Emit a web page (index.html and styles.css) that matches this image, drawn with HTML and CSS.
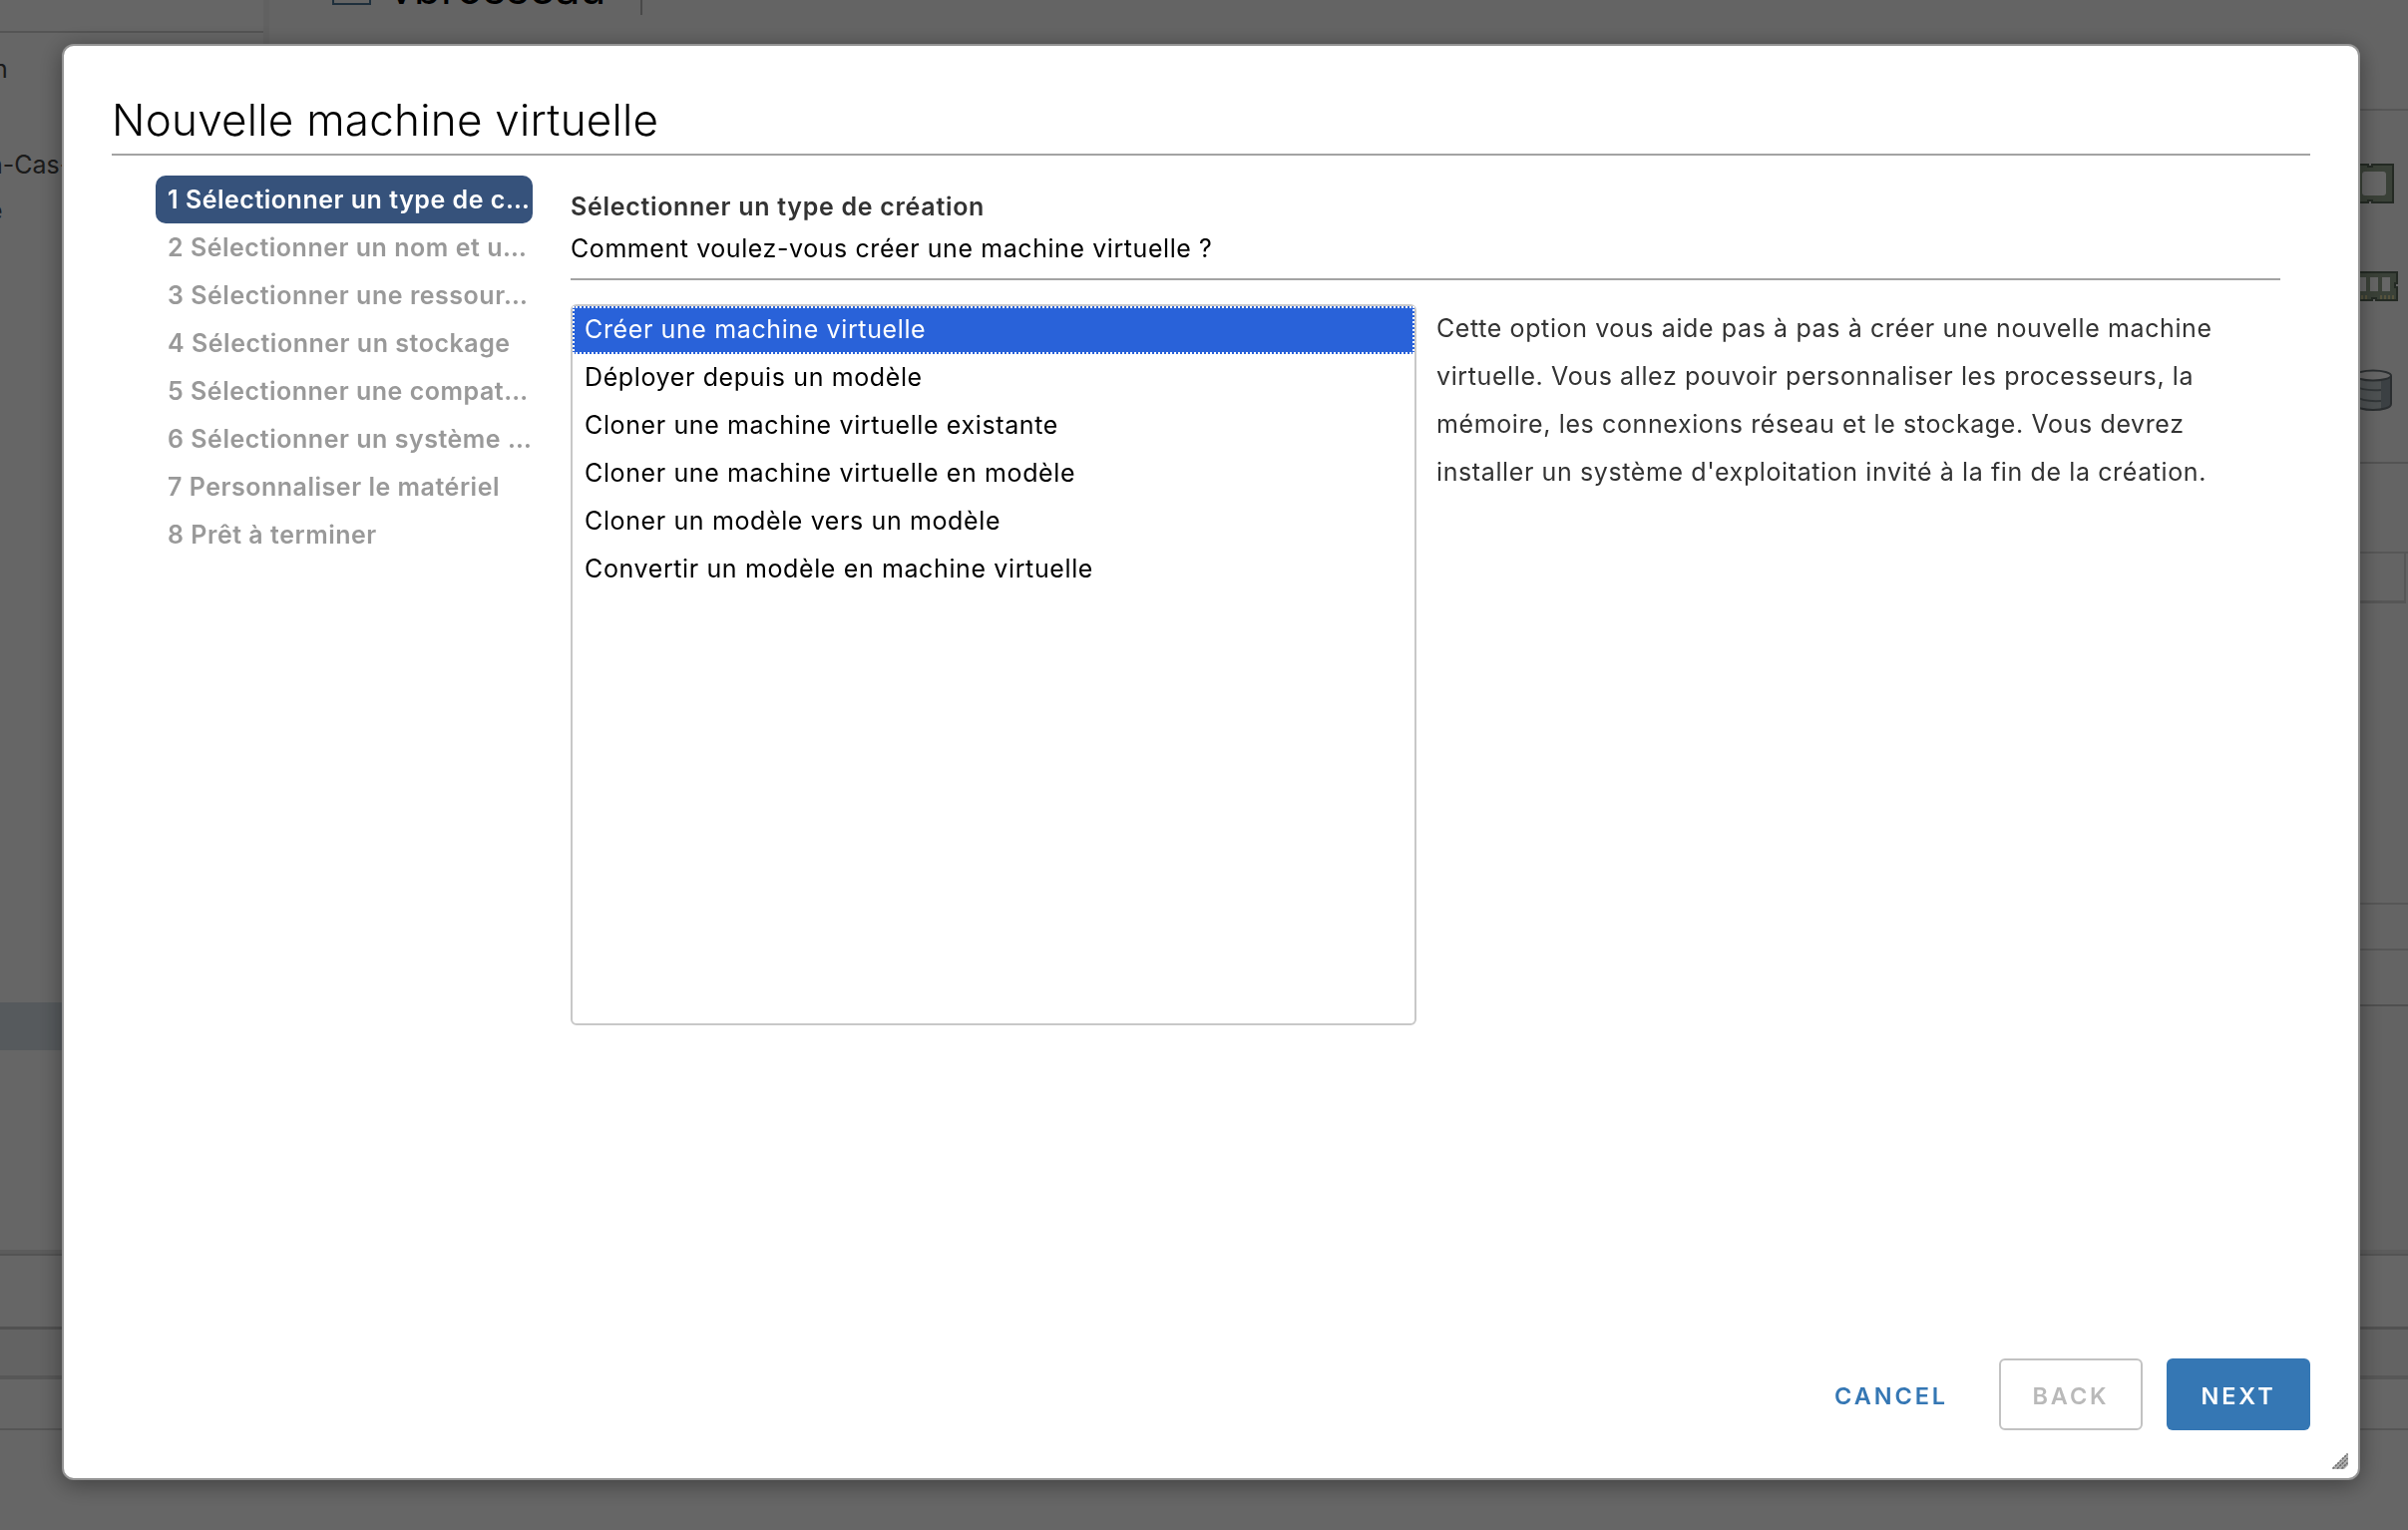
FILE: index.html
```
<!DOCTYPE html>
<html lang="fr">
<head>
<meta charset="utf-8">
<title>Nouvelle machine virtuelle</title>
<link rel="stylesheet" href="styles.css">
</head>
<body>
<div class="app">
  <div class="workspace">
    <aside class="tree">
      <div class="tree-head"></div>
      <div class="tree-row row-a">n</div>
      <div class="tree-row row-b">n-Cas-</div>
      <div class="tree-row row-c">e</div>
      <div class="tree-row selected"></div>
    </aside>
    <main class="main">
      <header class="object-head">
        <span class="object-icon"></span>
        <span class="object-name">vbrosseau</span>
        <span class="object-divider"></span>
      </header>
      <section class="meters">
        <svg width="48" height="40" viewBox="0 0 48 40">
          <path d="M5 1H18V3H22V1H43V39H22V37H18V39H5Z" fill="#92a38c" stroke="#5a6a5a" stroke-width="2"/>
          <rect x="12" y="8" width="24" height="24" rx="3" fill="#fff"/>
        </svg>
        <svg width="48" height="30" viewBox="0 0 48 30">
          <path d="M-4 1H47V12H45V16H47V29H26V27H22V29H-4Z" fill="#92a38c" stroke="#5a6a5a" stroke-width="2"/>
          <path d="M8 6h8v14H8zM20 6h8v14H20zM32 6h8v14H32z" fill="#fff"/>
          <path d="M12 24v4M16 24v4M31 24v4M35 24v4M39 24v4M43 24v4" stroke="#d6cf98" stroke-width="2"/>
        </svg>
        <svg width="48" height="42" viewBox="0 0 48 42">
          <path d="M5 7V35C5 43 41 43 41 35V7Z" fill="#c2cccf"/>
          <path d="M31 11L41 7V35Q40 39 31 40Z" fill="#93a1a8"/>
          <path d="M5 17Q12 22 31 21M5 27Q12 33 31 32" fill="none" stroke="#7d888c" stroke-width="2"/>
          <path d="M5 7V35C5 43 41 43 41 35V7" fill="none" stroke="#6b7478" stroke-width="2"/>
          <ellipse cx="23" cy="6.500" rx="18" ry="5" fill="#fff" stroke="#6b7478" stroke-width="2"/>
        </svg>
      </section>
      <section class="portlet-gap"></section>
      <section class="portlet-tabs"></section>
      <section class="portlet-body"></section>
      <section class="portlet-row"></section>
      <section class="portlet-foot"></section>
      <section class="main-fill"></section>
    </main>
  </div>
  <footer class="tasks">
    <div class="tasks-head"></div>
    <div class="tasks-columns"></div>
    <div class="tasks-row"></div>
  </footer>
</div>

<div class="backdrop">
  <div class="modal" role="dialog">
    <h1 class="modal-title">Nouvelle machine virtuelle</h1>
    <div class="modal-body">
      <ol class="steps">
        <li class="step active">1 Sélectionner un type de c…</li>
        <li class="step">2 Sélectionner un nom et u…</li>
        <li class="step">3 Sélectionner une ressour…</li>
        <li class="step">4 Sélectionner un stockage</li>
        <li class="step">5 Sélectionner une compat…</li>
        <li class="step">6 Sélectionner un système …</li>
        <li class="step">7 Personnaliser le matériel</li>
        <li class="step">8 Prêt à terminer</li>
      </ol>
      <div class="page">
        <div class="page-head">
          <h2 class="page-title">Sélectionner un type de création</h2>
          <p class="page-sub">Comment voulez-vous créer une machine virtuelle ?</p>
        </div>
        <div class="page-cols">
          <ul class="options">
            <li class="option chosen">Créer une machine virtuelle</li>
            <li class="option">Déployer depuis un modèle</li>
            <li class="option">Cloner une machine virtuelle existante</li>
            <li class="option">Cloner une machine virtuelle en modèle</li>
            <li class="option">Cloner un modèle vers un modèle</li>
            <li class="option">Convertir un modèle en machine virtuelle</li>
          </ul>
          <p class="description">Cette option vous aide pas à pas à créer une nouvelle machine<br>virtuelle. Vous allez pouvoir personnaliser les processeurs, la<br>mémoire, les connexions réseau et le stockage. Vous devrez<br>installer un système d'exploitation invité à la fin de la création.</p>
        </div>
      </div>
    </div>
    <div class="modal-footer">
      <button class="btn btn-link">CANCEL</button>
      <button class="btn btn-outline" disabled>BACK</button>
      <button class="btn btn-primary">NEXT</button>
    </div>
    <svg class="grip" width="16" height="16" viewBox="0 0 16 16">
      <path d="M16 0V12L12 16H0Z" fill="#b4b4b4"/>
      <path d="M0.500 15.500L15.500 0.500M5 15.500L15.500 5M9.500 15.500L15.500 9.500" stroke="#6e6e6e" stroke-width="1.600" stroke-dasharray="2.500 0.800"/>
    </svg>
  </div>
</div>
</body>
</html>
```
FILE: styles.css
```
* {
  box-sizing: border-box;
}

body {
  margin: 0;
  height: 1534px;
  overflow: hidden;
  background: #fff;
  color: #333;
  font-family: Inter, "Liberation Sans", sans-serif;
  font-size: 25px;
  letter-spacing: 0.57px;
}

h1, h2, p, ul, ol {
  margin: 0;
  padding: 0;
  list-style: none;
}

/* application behind the dialog */
.app {
  display: flex;
  flex-direction: column;
  height: 1534px;
}

.workspace {
  display: flex;
  height: 1257px;
  border-bottom: 4px solid #e6e6e6;
}

.tree {
  width: 270px;
  border-right: 6px solid #f3f3f3;
  overflow: hidden;
}

.tree-head {
  height: 33px;
  border-bottom: 2px solid #d4d4d4;
}

.tree-row {
  height: 48px;
  line-height: 48px;
  color: #444;
  letter-spacing: 0;
}

.row-a {
  margin: 12px 0 0 -7px;
}

.row-b {
  margin: 48px 0 0 -12px;
}

.row-c {
  margin: -2px 0 0 -12px;
}

.tree-row.selected {
  margin-top: 770px;
  background: #d8e1e8;
}

.main {
  display: flex;
  flex: 1;
  flex-direction: column;
  background: #fbfbfb;
}

.object-head {
  display: flex;
  align-items: flex-start;
  height: 111px;
  padding-left: 63px;
  border-bottom: 2px solid #d6d6d6;
}

.object-icon {
  width: 39px;
  height: 5px;
  border: 2px solid #4d7596;
  border-top: 0;
}

.object-name {
  width: 252px;
  margin: -24px 0 0 18px;
  color: #000;
  font-size: 44px;
  line-height: 24px;
  letter-spacing: 0;
}

.object-divider {
  width: 2px;
  height: 15px;
  background: #b5b5b5;
}

.meters {
  display: flex;
  flex-direction: column;
  align-items: flex-end;
  height: 354px;
  padding: 53px 10px 0 0;
  gap: 68px;
  border-bottom: 2px solid #cfcfcf;
}

.portlet-gap {
  height: 90px;
  border-bottom: 2px solid #dadada;
}

.portlet-tabs {
  height: 50px;
  margin-right: 2px;
  border-right: 2px solid #dadada;
  border-bottom: 3px solid #d6d6d6;
}

.portlet-body {
  height: 302px;
  border-bottom: 2px solid #d9d9d9;
}

.portlet-row {
  height: 46px;
  border-bottom: 2px solid #d9d9d9;
}

.portlet-foot {
  height: 56px;
  border-bottom: 2px solid #c6c6c6;
}

.main-fill {
  flex: 1;
  background: #f7f7f7;
}

.tasks-head {
  height: 76px;
  border-top: 2px solid #cfcfcf;
  border-bottom: 3px solid #cacaca;
}

.tasks-columns {
  height: 50px;
  background: #f8f8f8;
  border-bottom: 4px solid #dadada;
}

.tasks-row {
  height: 51px;
  border-bottom: 2px solid #d6d6d6;
}

/* dialog */
.backdrop {
  position: fixed;
  inset: 0;
  display: flex;
  padding: 44px 48px 50px 62px;
  background: rgba(0, 0, 0, 0.6);
}

.modal {
  position: relative;
  display: flex;
  flex: 1;
  flex-direction: column;
  padding: 0 48px 48px;
  border: 2px solid #949494;
  border-radius: 12px;
  background: #fff;
  box-shadow: 0 4px 24px rgba(0, 0, 0, 0.4);
}

.modal-title {
  padding: 46px 0 6px;
  border-bottom: 2px solid #a3a3a3;
  color: #000;
  font-size: 44px;
  font-weight: 300;
  line-height: 56px;
  letter-spacing: 0.25px;
}

.modal-body {
  display: flex;
  gap: 38px;
  padding: 0 30px 0 44px;
}

.steps {
  width: 378px;
  padding-top: 20px;
}

.step {
  height: 48px;
  padding-left: 12px;
  border-radius: 10px;
  color: #999;
  font-weight: 600;
  line-height: 48px;
  letter-spacing: 0.52px;
  white-space: nowrap;
}

.step.active {
  background: #36527b;
  color: #fff;
}

.page {
  flex: 1;
}

.page-head {
  padding: 30px 0 9px;
  border-bottom: 2px solid #a3a3a3;
}

.page-title {
  color: #333;
  font-size: 25px;
  font-weight: 600;
  line-height: 42px;
  letter-spacing: 0.7px;
}

.page-sub {
  color: #000;
  line-height: 42px;
}

.page-cols {
  display: flex;
  gap: 20px;
  padding-top: 24px;
}

.options {
  width: 848px;
  height: 723px;
  border: 2px solid #c8c8c8;
  border-radius: 6px;
}

.option {
  height: 48px;
  padding-left: 12px;
  color: #000;
  line-height: 46px;
  letter-spacing: 0.62px;
}

.option.chosen {
  padding-left: 10px;
  border: 2px dotted #fff;
  background: #2962d9;
  color: #fff;
  line-height: 42px;
}

.description {
  line-height: 48px;
  letter-spacing: 0.61px;
  white-space: nowrap;
}

.modal-footer {
  display: flex;
  gap: 24px;
  justify-content: flex-end;
  margin-top: auto;
}

.btn {
  width: 144px;
  height: 72px;
  padding: 2px 0 0;
  border: 2px solid transparent;
  border-radius: 6px;
  background: transparent;
  font-family: inherit;
  font-size: 23.5px;
  font-weight: 600;
  letter-spacing: 2.9px;
}

.btn-link {
  margin-right: 12px;
  color: #3577b4;
}

.btn-outline {
  border-color: #c2c2c2;
  color: #b9b9b9;
}

.btn-primary {
  background: #3577b4;
  color: #fff;
}

.grip {
  position: absolute;
  right: 10px;
  bottom: 9px;
}
```
